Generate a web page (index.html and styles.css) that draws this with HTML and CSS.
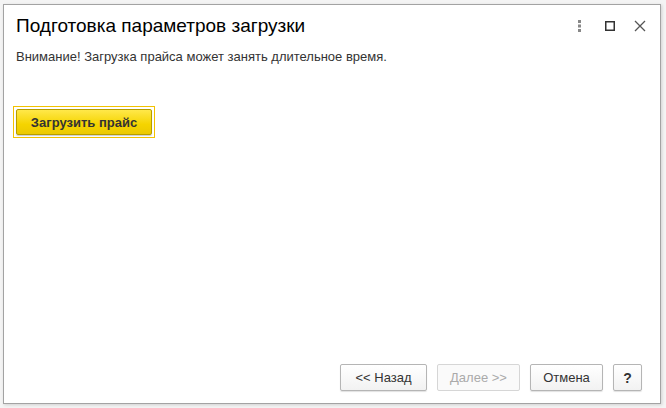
FILE: index.html
```html
<!DOCTYPE html>
<html lang="ru">
<head>
    <meta charset="UTF-8">
    <title>Подготовка параметров загрузки</title>
    <link rel="stylesheet" href="styles.css">
</head>
<body>

<div class="window">
    <div class="title-bar">
        <h1 class="title">Подготовка параметров загрузки</h1>
        <div class="window-tools">
            <span class="tool">
                <svg width="6" height="12" viewBox="0 0 6 12">
                    <rect x="1" y="0" width="3" height="3" fill="#888"/>
                    <rect x="1" y="4.5" width="3" height="3" fill="#888"/>
                    <rect x="1" y="9" width="3" height="3" fill="#888"/>
                </svg>
            </span>
            <span class="tool">
                <svg width="10" height="10" viewBox="0 0 10 10">
                    <rect x="0.75" y="0.75" width="8.5" height="8.5" fill="none" stroke="#333" stroke-width="1.5"/>
                </svg>
            </span>
            <span class="tool">
                <svg width="12" height="12" viewBox="0 0 12 12">
                    <path d="M1 1 L11 11 M11 1 L1 11" stroke="#555" stroke-width="1.3"/>
                </svg>
            </span>
        </div>
    </div>

    <p class="notice">Внимание! Загрузка прайса может занять длительное время.</p>

    <div class="actions">
        <span class="focus-ring">
            <button class="btn-primary">Загрузить прайс</button>
        </span>
    </div>

    <div class="footer">
        <button class="btn btn-back">&lt;&lt; Назад</button>
        <button class="btn btn-next" disabled>Далее &gt;&gt;</button>
        <button class="btn btn-cancel">Отмена</button>
        <button class="btn btn-help">?</button>
    </div>
</div>

</body>
</html>
```

FILE: styles.css
```css
body {
    font-family: Arial, "Liberation Sans", sans-serif;
    margin: 0;
    padding: 4px 5px 4px 3px;
    background-color: #f4f4f4;
    height: 408px;
    box-sizing: border-box;
}

.window {
    height: 400px;
    box-sizing: border-box;
    border: 1px solid #a3a3a3;
    background: #fff;
    box-shadow: 1px 1px 3px rgba(0, 0, 0, 0.15);
    display: flex;
    flex-direction: column;
}

.title-bar {
    display: flex;
    align-items: center;
    justify-content: space-between;
    height: 42px;
    padding: 0 5px 0 12px;
}

.title {
    margin: 0;
    font-size: 19px;
    font-weight: normal;
    color: #000;
}

.window-tools {
    display: flex;
    align-items: center;
}

.tool {
    display: flex;
    align-items: center;
    justify-content: center;
    width: 30px;
    height: 20px;
}

.notice {
    margin: 2px 0 0 12px;
    font-size: 13px;
    color: #333;
}

.actions {
    padding: 42px 0 0 9px;
}

.focus-ring {
    display: inline-block;
    border: 1px solid #f2c200;
    padding: 2px;
}

.btn-primary {
    display: block;
    height: 26px;
    width: 136px;
    padding: 0;
    font-family: inherit;
    font-size: 13px;
    font-weight: bold;
    color: #333;
    border: 1px solid #b59d00;
    border-radius: 2px;
    background: linear-gradient(#ffe84a, #f5d400 60%, #ecc900);
    box-shadow: 0 1px 1px rgba(0, 0, 0, 0.2);
}

.footer {
    margin-top: auto;
    display: flex;
    justify-content: flex-end;
    gap: 10px;
    padding: 0 18px 12px 0;
}

.btn {
    height: 27px;
    padding: 0;
    font-family: inherit;
    font-size: 13px;
    color: #333;
    background: linear-gradient(#fff, #f2f2f2);
    border: 1px solid #b5b5b5;
    border-radius: 2px;
    box-shadow: 0 1px 1px rgba(0, 0, 0, 0.12);
}

.btn-back {
    width: 87px;
}

.btn-next {
    width: 83px;
}

.btn-cancel {
    width: 73px;
}

.btn:disabled {
    color: #aaa;
    border-color: #d6d6d6;
    background: #fafafa;
    box-shadow: none;
}

.btn-help {
    width: 29px;
    font-weight: bold;
    font-size: 14px;
}
```
